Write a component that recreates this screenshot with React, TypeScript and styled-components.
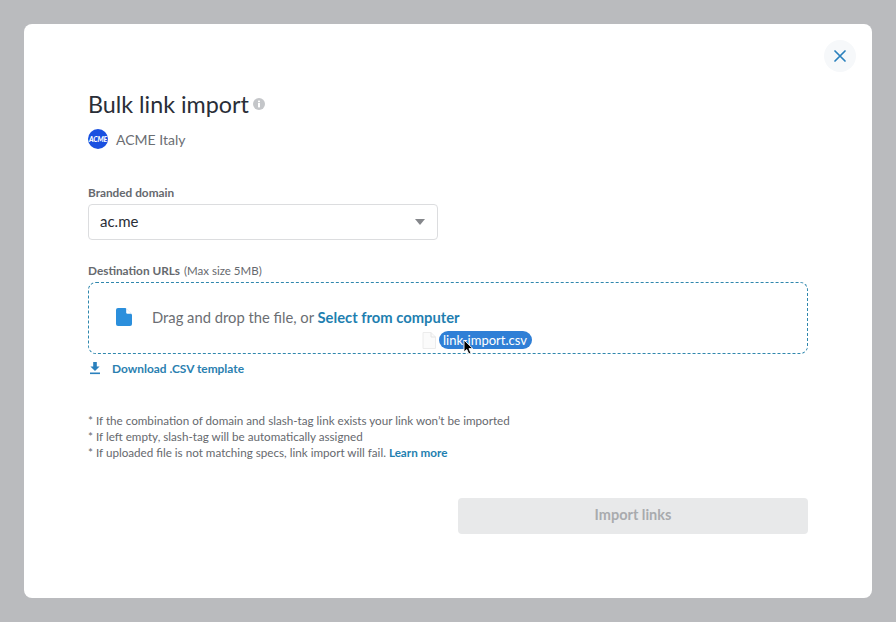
import React from "react";
import styled, { createGlobalStyle } from "styled-components";

const Global = createGlobalStyle`
  html, body { margin: 0; padding: 0; }
  body { font-family: "Lato", "Liberation Sans", sans-serif; background: #babbbe; }
`;

const Backdrop = styled.div`
  width: 896px;
  height: 622px;
  padding: 24px;
  box-sizing: border-box;
  background: #babbbe;
  overflow: hidden;
`;

const Modal = styled.div`
  position: relative;
  width: 848px;
  height: 574px;
  box-sizing: border-box;
  padding: 63px 64px 0;
  background: #fff;
  border-radius: 8px;
`;

const CloseButton = styled.button`
  position: absolute;
  top: 16px;
  right: 16px;
  width: 32px;
  height: 32px;
  border: 0;
  padding: 0;
  border-radius: 50%;
  background: #f6f8fa;
  display: flex;
  align-items: center;
  justify-content: center;
`;

const TitleRow = styled.div`
  display: flex;
  align-items: center;
  gap: 4px;
  height: 34px;
`;

const Title = styled.h1`
  margin: 0;
  font-size: 23.3px;
  line-height: 34px;
  font-weight: 400;
  color: #2a2e37;
`;

const Workspace = styled.div`
  display: flex;
  align-items: center;
  gap: 8px;
  margin-top: 6px;
  height: 24px;
  font-size: 14px;
  color: #6b6e73;
`;

const Avatar = styled.span`
  width: 20px;
  height: 20px;
  border-radius: 50%;
  background: #1a50e0;
  color: #fff;
  font-size: 7px;
  font-weight: 900;
  font-style: italic;
  letter-spacing: -0.2px;
  display: flex;
  align-items: center;
  justify-content: center;
  overflow: hidden;
`;

const Label = styled.div<{ $top: number }>`
  margin-top: ${(p) => p.$top}px;
  font-size: 11.8px;
  line-height: 16px;
  font-weight: 700;
  color: #66696e;
  small {
    font-size: 11.5px;
    font-weight: 400;
    margin-left: 4px;
  }
`;

const Select = styled.div`
  margin-top: 3px;
  width: 350px;
  height: 36px;
  box-sizing: border-box;
  padding: 0 12px 3px 11px;
  border: 1px solid #dcdddf;
  border-radius: 4px;
  display: flex;
  align-items: center;
  justify-content: space-between;
  font-size: 15px;
  color: #2a2e37;
`;

const Caret = styled.span`
  width: 0;
  height: 0;
  margin-top: 3px;
  border-left: 5px solid transparent;
  border-right: 5px solid transparent;
  border-top: 6px solid #85878b;
`;

const DropZone = styled.div`
  position: relative;
  margin-top: 3px;
  height: 72px;
  box-sizing: border-box;
  padding: 0 0 2px 27px;
  border: 1px dashed #2f87ad;
  border-radius: 8px;
  display: flex;
  align-items: center;
  gap: 20px;
  font-size: 14.75px;
  color: #6b6e73;
`;

const SelectLink = styled.a`
  color: #1f7fb0;
  font-weight: 700;
`;

const DragGhost = styled.div`
  position: absolute;
  left: 333px;
  top: 48px;
  display: flex;
  align-items: center;
  gap: 3px;
`;

const Pill = styled.span`
  height: 18px;
  padding: 0 5px 0 4px;
  border-radius: 9px;
  background: #2f7fd6;
  color: #fff;
  font-size: 13px;
  line-height: 18px;
  white-space: nowrap;
`;

const Pointer = styled.svg`
  position: absolute;
  left: 41px;
  top: 8px;
`;

const Download = styled.a`
  display: flex;
  align-items: center;
  gap: 10px;
  margin-top: 6px;
  height: 16px;
  font-size: 11.9px;
  font-weight: 700;
  color: #2a80b0;
`;

const Notes = styled.div`
  margin-top: 36px;
  font-size: 11.67px;
  line-height: 16px;
  color: #66696e;
  a {
    color: #1f7fb0;
    font-weight: 700;
  }
`;

const Footer = styled.div`
  display: flex;
  justify-content: flex-end;
  margin-top: 38px;
`;

const ImportButton = styled.button`
  width: 350px;
  height: 36px;
  border: 0;
  padding: 0 0 3px;
  border-radius: 4px;
  background: #e8e9ea;
  color: #a9abae;
  font-family: inherit;
  font-size: 14.5px;
  font-weight: 700;
`;

export default function App() {
  return (
    <>
      <Global />
      <Backdrop>
        <Modal>
          <CloseButton aria-label="Close">
            <svg width="12" height="12" viewBox="0 0 12 12">
              <path d="M1 1L11 11M11 1L1 11" stroke="#2a80bd" strokeWidth="1.7" strokeLinecap="round" />
            </svg>
          </CloseButton>
          <TitleRow>
            <Title>Bulk link import</Title>
            <svg width="12" height="12" viewBox="0 0 12 12">
              <circle cx="6" cy="6" r="6" fill="#c4c6c9" />
              <rect x="5" y="5" width="2" height="4.4" fill="#fff" />
              <rect x="5" y="2.6" width="2" height="1.6" fill="#fff" />
            </svg>
          </TitleRow>
          <Workspace>
            <Avatar>ACME</Avatar>
            ACME Italy
          </Workspace>
          <Label $top={34}>Branded domain</Label>
          <Select>
            ac.me
            <Caret />
          </Select>
          <Label $top={23}>
            Destination URLs<small>(Max size 5MB)</small>
          </Label>
          <DropZone>
            <svg width="16" height="18" viewBox="0 0 16 18">
              <path d="M2 0H9.5L16 6.5V16a2 2 0 0 1-2 2H2a2 2 0 0 1-2-2V2a2 2 0 0 1 2-2Z" fill="#2b8fdc" />
              <path d="M10.2 0.6V4.6a1.2 1.2 0 0 0 1.2 1.2h4Z" fill="#fff" />
            </svg>
            <span>
              Drag and drop the file, or <SelectLink>Select from computer</SelectLink>
            </span>
            <DragGhost>
              <svg width="14" height="17" viewBox="0 0 14 17">
                <path d="M1 0.5H9L13.5 5V16.5H1Z" fill="#fbfbfb" stroke="#ececec" />
                <path d="M9 0.5V5H13.5" fill="none" stroke="#e4e4e4" />
              </svg>
              <Pill>link-import.csv</Pill>
              <Pointer width="11" height="16" viewBox="0 0 11 16">
                <path d="M1 1V13L3.8 10.5L5.8 15L7.9 14L6 9.6H9.8Z" fill="#000" stroke="#fff" strokeWidth="0.9" />
              </Pointer>
            </DragGhost>
          </DropZone>
          <Download>
            <svg width="14" height="14" viewBox="0 0 14 14">
              <path d="M5.2 1H8.8V5.5H11.6L7 10L2.4 5.5H5.2Z" fill="#2a80bd" />
              <rect x="2" y="11.5" width="10" height="1.6" fill="#2a80bd" />
            </svg>
            Download .CSV template
          </Download>
          <Notes>
            <div>* If the combination of domain and slash-tag link exists your link won’t be imported</div>
            <div>* If left empty, slash-tag will be automatically assigned</div>
            <div>
              * If uploaded file is not matching specs, link import will fail. <a>Learn more</a>
            </div>
          </Notes>
          <Footer>
            <ImportButton disabled>Import links</ImportButton>
          </Footer>
        </Modal>
      </Backdrop>
    </>
  );
}
